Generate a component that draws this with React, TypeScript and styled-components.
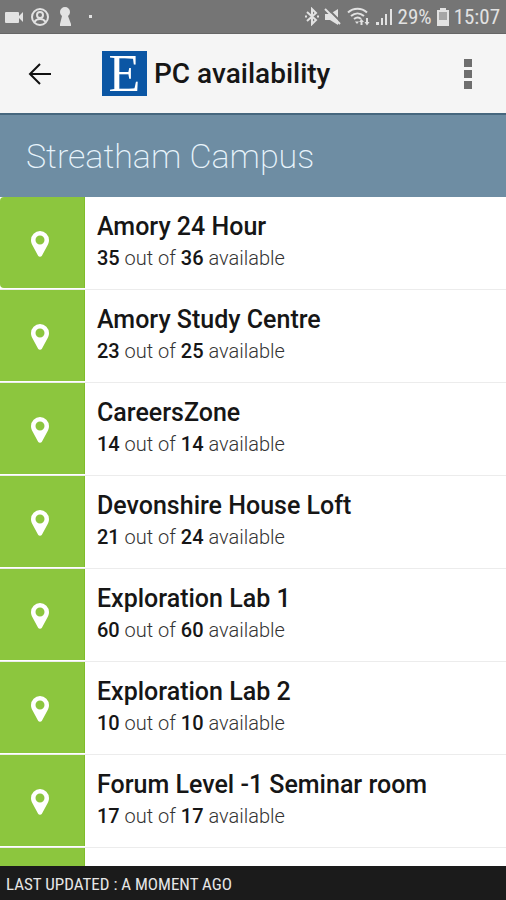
import React from "react";
import styled, { createGlobalStyle } from "styled-components";

const GlobalStyle = createGlobalStyle`
  *, *::before, *::after { box-sizing: border-box; }
  body {
    margin: 0;
    background: #fff;
    color: #161616;
    font-family: Roboto, "Liberation Sans", sans-serif;
  }
`;

const Screen = styled.div`
  display: flex;
  flex-direction: column;
  height: 100vh;
  overflow: hidden;
`;

const StatusBar = styled.div`
  flex: none;
  display: flex;
  align-items: center;
  justify-content: space-between;
  height: 34px;
  padding: 0 6px 0 5px;
  background: #757575;
  border-bottom: 1px solid #666;
  color: #e2e2e2;
`;

const StatusGroup = styled.div<{ $gap: number }>`
  display: flex;
  align-items: center;
  gap: ${({ $gap }) => $gap}px;
  font-family: "Roboto Condensed", Roboto, sans-serif;
  font-size: 21px;
  line-height: 36px;
  svg { display: block; flex: none; }
`;

const AppBar = styled.header`
  flex: none;
  display: flex;
  align-items: center;
  height: 79px;
  padding: 0 22px 0 20px;
  background: #f5f5f5;
`;

const IconButton = styled.button`
  display: flex;
  align-items: center;
  justify-content: center;
  width: 40px;
  height: 48px;
  padding: 0;
  border: 0;
  background: none;
  color: #111;
  cursor: pointer;
`;

const MenuButton = styled(IconButton)`
  width: 32px;
  margin-left: auto;
  color: #6e6e6e;
`;

const Logo = styled.div`
  display: flex;
  align-items: center;
  justify-content: center;
  width: 45px;
  height: 45px;
  margin: 0 7px 0 42px;
  background: #0b56a4;
  color: #fff;
  font: 52px/45px "Liberation Serif", serif;
`;

const Title = styled.h1`
  margin: 0;
  font-size: 28px;
  font-weight: 500;
  line-height: 38px;
`;

const CampusHeading = styled.h2`
  flex: none;
  margin: 0;
  padding: 0 26px;
  height: 84px;
  border-top: 2px solid #46677e;
  background: #6e8da3;
  color: #e8f4fc;
  font-size: 34px;
  font-weight: 200;
  line-height: 82px;
`;

const RoomList = styled.ul`
  flex: 1;
  min-height: 0;
  margin: 0;
  padding: 0;
  overflow-y: auto;
  scrollbar-width: none;
  list-style: none;
`;

const RoomRow = styled.li`
  display: flex;
  height: 93px;
  border-bottom: 1px solid #ececec;
  &:first-child > :first-child { border-radius: 4px 0 0 4px; }
`;

const PinCell = styled.div`
  flex: none;
  display: flex;
  align-items: center;
  justify-content: center;
  width: 85px;
  height: 91px;
  padding: 3px 5px 0 0;
  background: #8cc63e;
  border-right: 1px solid #80bd2a;
`;

const RoomText = styled.div`
  padding: 14px 12px 0;
`;

const RoomName = styled.h3`
  margin: 0;
  font-size: 25px;
  font-weight: 500;
  line-height: 32px;
`;

const Availability = styled.p`
  margin: 0;
  color: #333;
  font-size: 20px;
  font-weight: 300;
  line-height: 30px;
  b { color: #161616; font-weight: 500; }
`;

const Footer = styled.footer`
  flex: none;
  height: 34px;
  padding: 0 6px;
  background: #1b1b1b;
  color: #e6e6e6;
  font-family: "Roboto Condensed", Roboto, sans-serif;
  font-size: 17px;
  line-height: 36px;
  text-transform: uppercase;
`;

const Pin = () => (
  <svg width="18" height="26" viewBox="0 0 18 26" aria-hidden="true">
    <path
      fill="#fff"
      fillRule="evenodd"
      d="M9 0a9 9 0 0 0-9 9c0 2 .6 3.600 1.300 5.100l5.800 10.600a2.200 2.200 0 0 0 3.800 0l5.800-10.600C17.400 12.600 18 11 18 9a9 9 0 0 0-9-9zm0 4.500a4.500 4.500 0 1 1 0 9 4.500 4.500 0 0 1 0-9z"
    />
  </svg>
);

const rooms = [
  { name: "Amory 24 Hour", free: 35, total: 36 },
  { name: "Amory Study Centre", free: 23, total: 25 },
  { name: "CareersZone", free: 14, total: 14 },
  { name: "Devonshire House Loft", free: 21, total: 24 },
  { name: "Exploration Lab 1", free: 60, total: 60 },
  { name: "Exploration Lab 2", free: 10, total: 10 },
  { name: "Forum Level -1 Seminar room", free: 17, total: 17 },
];

export default function App() {
  return (
    <Screen>
      <GlobalStyle />
      <StatusBar>
        <StatusGroup $gap={7}>
          <svg width="19" height="12" viewBox="0 0 19 12" fill="currentColor">
            <rect y="1" width="14" height="11" rx="1" />
            <path d="M14 5l4-4v10l-4-4z" />
          </svg>
          <svg width="18" height="18" viewBox="0 0 18 18" fill="none" stroke="currentColor" strokeWidth="2">
            <circle cx="9" cy="9" r="8" />
            <circle cx="9" cy="7" r="3" />
            <path d="M3.500 14c1-2 3-3 5.500-3s4.500 1 5.500 3" />
          </svg>
          <svg width="18" height="19" viewBox="0 0 18 19" fill="currentColor">
            <path d="M9 0a5 5 0 0 0-5 5c0 2 1 3 2 4l-2 8v2h11v-2l-3-8c1-1 2-2 2-4a5 5 0 0 0-5-5z" />
          </svg>
          <svg width="18" height="4" viewBox="0 0 18 4" fill="currentColor">
            <rect x="8" width="3" height="3" />
          </svg>
        </StatusGroup>
        <StatusGroup $gap={5}>
          <svg width="14" height="19" viewBox="0 0 14 19" fill="none" stroke="currentColor" strokeWidth="2">
            <path d="M2 5l9 8-4 4V2l4 4-9 8" />
            <path d="M0 9.500h2M12 9.500h2" />
          </svg>
          <svg width="18" height="18" viewBox="0 0 18 18" fill="currentColor">
            <path d="M1 6h5l8-5v16l-8-5H1z" />
            <path d="M3 0l15 15" stroke="#757575" strokeWidth="2" />
            <path d="M1 1l15 15" stroke="currentColor" strokeWidth="2" />
          </svg>
          <svg width="24" height="19" viewBox="0 0 24 19" fill="none" stroke="currentColor" strokeWidth="2">
            <path d="M1 5.500c5.500-5 13.500-5 19 0M4 9c4-3.500 9-3.500 13 0M7 12c2.500-2 5-2 7 0" />
            <path d="M8 14.500h4l-2 2.500z" fill="currentColor" stroke="none" />
            <path d="M12 15l2.500-3 2.500 3zM13.500 14h2v4h-2zM17.500 15h5l-2.500 3.500zM19 11h2v4h-2z" fill="currentColor" stroke="none" />
          </svg>
          <svg width="17" height="18" viewBox="0 0 17 18" fill="currentColor">
            <rect y="14" width="3" height="3" />
            <rect x="5" y="10" width="2" height="7" />
            <rect x="9" y="6" width="2" height="11" />
            <rect x="14" y="1" width="2" height="16" />
          </svg>
          <span>29%</span>
          <svg width="12" height="18" viewBox="0 0 12 18" fill="currentColor">
            <path d="M3 0h6v2H3z" />
            <path d="M0 2h12v16H0zM2 4v8h8V4z" fillRule="evenodd" />
            <path d="M2 4h8v8H2z" opacity=".45" />
          </svg>
          <span>15:07</span>
        </StatusGroup>
      </StatusBar>

      <AppBar>
        <IconButton type="button" aria-label="Back">
          <svg width="24" height="22" viewBox="0 0 24 22" fill="none" stroke="currentColor" strokeWidth="2">
            <path d="M23 11H2M12 1L2 11l10 10" />
          </svg>
        </IconButton>
        <Logo aria-hidden="true">E</Logo>
        <Title>PC availability</Title>
        <MenuButton type="button" aria-label="More options">
          <svg width="8" height="30" viewBox="0 0 8 30" fill="currentColor">
            <rect width="8" height="8" />
            <rect y="11" width="8" height="8" />
            <rect y="22" width="8" height="8" />
          </svg>
        </MenuButton>
      </AppBar>

      <CampusHeading>Streatham Campus</CampusHeading>

      <RoomList>
        {rooms.map((room) => (
          <RoomRow key={room.name}>
            <PinCell>
              <Pin />
            </PinCell>
            <RoomText>
              <RoomName>{room.name}</RoomName>
              <Availability>
                <b>{room.free}</b> out of <b>{room.total}</b> available
              </Availability>
            </RoomText>
          </RoomRow>
        ))}
        <RoomRow>
          <PinCell>
            <Pin />
          </PinCell>
        </RoomRow>
      </RoomList>

      <Footer>Last updated : a moment ago</Footer>
    </Screen>
  );
}
